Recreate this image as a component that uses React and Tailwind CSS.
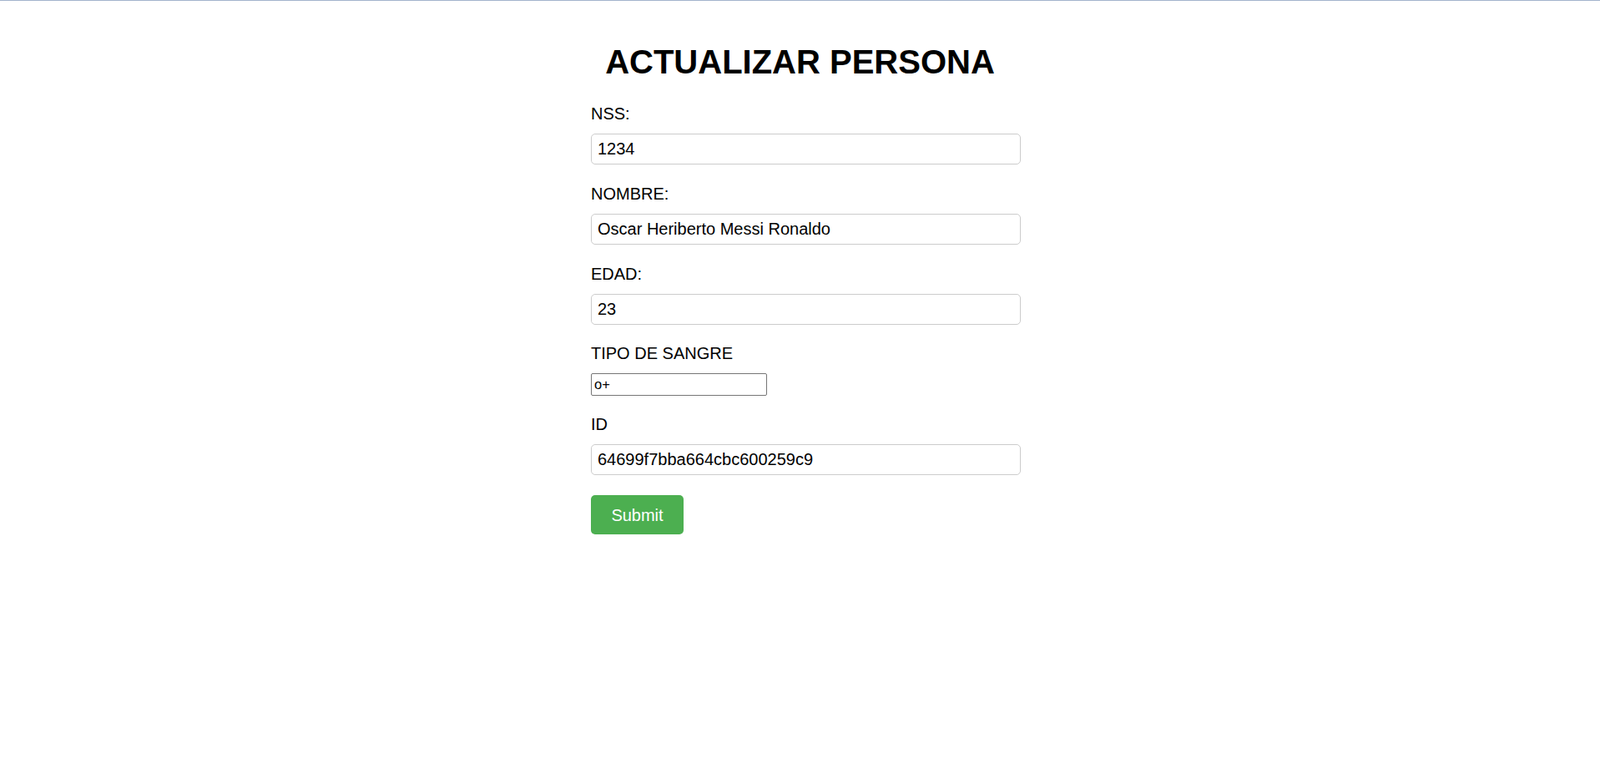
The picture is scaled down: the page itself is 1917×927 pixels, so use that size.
import React from 'react';

function Field({ label, value }) {
    return (
        <div className="mb-[24px]">
            <label className="block h-[23px] leading-[23px] text-[20px] text-black mb-[12px]">{label}</label>
            <input
                type="text"
                defaultValue={value}
                className="block w-[515px] h-[37px] px-[7px] text-[20px] text-black border border-[#cccccc] rounded-[5px] bg-white outline-none"
            />
        </div>
    );
}

export default function App() {
    return (
        <div className="min-h-screen bg-white border-t border-[#a3b3cc] font-['Liberation_Sans',Arial,sans-serif]">
            <div className="w-[515px] mx-auto pt-[50px] translate-x-[7px]">
                <h1 className="text-[40px] leading-[46px] font-bold text-black text-center -translate-x-[7px] mb-[28px]">
                    ACTUALIZAR PERSONA
                </h1>

                <form onSubmit={(e) => e.preventDefault()}>
                    <Field label="NSS:" value="1234" />
                    <Field label="NOMBRE:" value="Oscar Heriberto Messi Ronaldo" />
                    <Field label="EDAD:" value="23" />

                    <div className="mb-[23px]">
                        <label className="block h-[23px] leading-[23px] text-[20px] text-black mb-[12px] -mt-[1px]">TIPO DE SANGRE</label>
                        <input
                            type="text"
                            defaultValue="o+"
                            className="block w-[211px] h-[27px] px-[3px] text-[16.5px] text-black border border-[#767676] rounded-[2px] bg-white outline-none"
                        />
                    </div>

                    <Field label="ID" value="64699f7bba664cbc600259c9" />

                    <button
                        type="submit"
                        className="w-[111px] h-[47px] rounded-[5px] bg-[#4caf50] text-white text-[20px] flex items-center justify-center"
                    >
                        Submit
                    </button>
                </form>
            </div>
        </div>
    );
}
